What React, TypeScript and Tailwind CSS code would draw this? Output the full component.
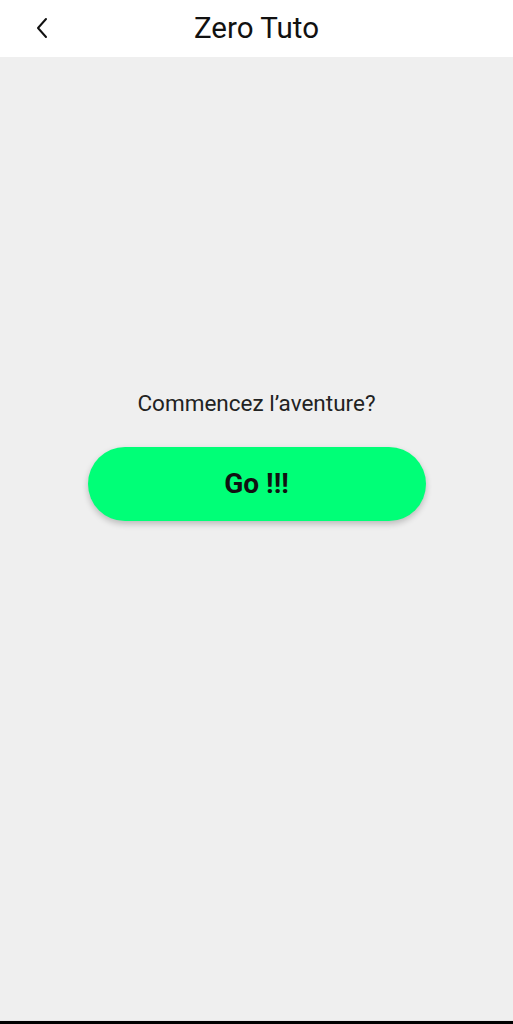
import React from 'react'

export default function App() {
  return (
    <div className="flex flex-col h-[1024px] w-full bg-[#efefef]" style={{ fontFamily: 'Roboto, "Noto Sans", sans-serif' }}>
      <header className="relative flex items-center justify-center h-[57px] bg-white shrink-0">
        <button className="absolute left-[27px] top-[12px] size-8 flex items-center justify-center">
          <svg width="24" height="24" viewBox="0 0 24 24" fill="none" stroke="#111" strokeWidth="2" strokeLinecap="round" strokeLinejoin="round">
            <path d="M15 3 L7 12 L15 21" />
          </svg>
        </button>
        <h1 className="text-[29.5px] text-[#111] leading-none">Zero Tuto</h1>
      </header>
      <main className="flex-1 flex flex-col items-center pt-[330px]">
        <p className="text-[22.5px] leading-8 text-[#222]">Commencez l&rsquo;aventure?</p>
        <button className="mt-[28px] w-[338px] h-[74px] rounded-full bg-[#00ff77] shadow-[0_3px_6px_rgba(0,0,0,0.22)] text-[28px] font-bold text-[#111]">
          Go !!!
        </button>
      </main>
      <div className="h-px bg-[#e6e6e6] shrink-0" />
      <div className="h-[3px] bg-black shrink-0" />
    </div>
  )
}
